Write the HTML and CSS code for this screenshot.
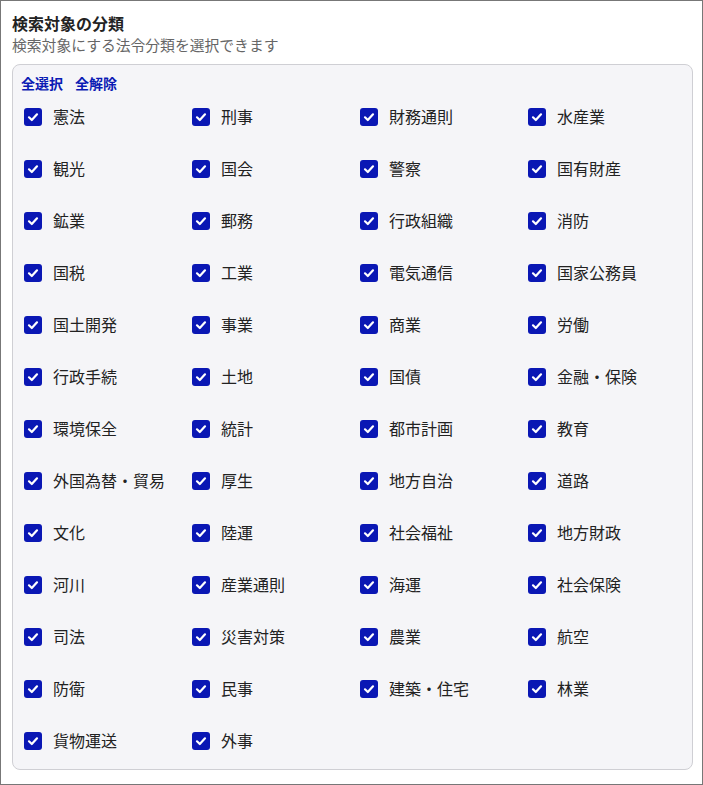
FILE: index.html
```html
<!DOCTYPE html>
<html lang="ja">
<head>
<meta charset="utf-8">
<title>検索対象の分類</title>
<link rel="stylesheet" href="styles.css">
</head>
<body>
<div class="page">
  <div class="title">検索対象の分類</div>
  <div class="subtitle">検索対象にする法令分類を選択できます</div>
  <div class="box">
    <div class="links"><a class="link">全選択</a><a class="link">全解除</a></div>
    <div class="grid" id="grid"></div>
  </div>
</div>
<script>
const items = ["憲法","刑事","財務通則","水産業","観光","国会","警察","国有財産","鉱業","郵務","行政組織","消防","国税","工業","電気通信","国家公務員","国土開発","事業","商業","労働","行政手続","土地","国債","金融・保険","環境保全","統計","都市計画","教育","外国為替・貿易","厚生","地方自治","道路","文化","陸運","社会福祉","地方財政","河川","産業通則","海運","社会保険","司法","災害対策","農業","航空","防衛","民事","建築・住宅","林業","貨物運送","外事"];
const g = document.getElementById('grid');
const check = '<svg class="ck" viewBox="0 0 18 18" width="18" height="18"><path d="M5 9.3 L7.8 12 L13 6.3" fill="none" stroke="#fff" stroke-width="2.2" stroke-linecap="round" stroke-linejoin="round"/></svg>';
g.innerHTML = items.map(t => '<label class="item"><span class="box-ck">' + check + '</span><span class="lbl">' + t + '</span></label>').join('');
</script>
</body>
</html>
```
FILE: styles.css
```css
html, body {
  margin: 0;
  padding: 0;
  background: #fff;
}
body {
  font-family: "Noto Sans CJK JP", "Noto Sans", sans-serif;
  color: #222;
}
.page {
  width: 703px;
  height: 785px;
  box-sizing: border-box;
  border: 1px solid #777;
  padding: 11px 9px 11px 11px;
}
.title {
  font-size: 16px;
  font-weight: 700;
  line-height: 22px;
  color: #222;
}
.subtitle {
  margin-top: 1px;
  font-size: 14.8px;
  line-height: 20px;
  color: #666;
}
.box {
  margin-top: 9px;
  background: #f5f5f8;
  border: 1px solid #cfcfd4;
  border-radius: 8px;
  padding: 10px 0 2px 8px;
}
.links {
  display: flex;
  line-height: 16px;
  font-size: 14px;
  font-weight: 700;
}
.link {
  color: #0a1ab4;
  margin-right: 12px;
  cursor: pointer;
}
.grid {
  display: grid;
  grid-template-columns: repeat(4, 168px);
  grid-auto-rows: 52px;
}
.item {
  display: flex;
  align-items: center;
}
.box-ck {
  width: 18px;
  height: 18px;
  margin-left: 3px;
  border-radius: 3px;
  background: #0a17b4;
  display: flex;
}
.lbl {
  margin-left: 11px;
  padding-bottom: 2px;
  font-size: 16px;
  line-height: 20px;
  color: #222;
}
```
